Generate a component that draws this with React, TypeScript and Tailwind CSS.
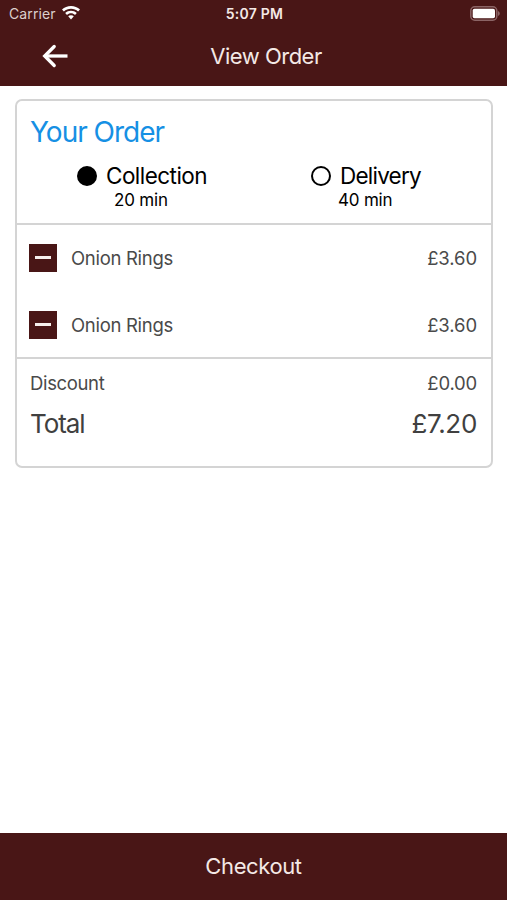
import { useState } from "react"

const methods = [
  { id: "collection", label: "Collection", time: "20 min", box: "pl-[60px] w-[294px]", timePad: "pl-[37px]", spacing: "tracking-[-0.54px]" },
  { id: "delivery", label: "Delivery", time: "40 min", box: "", timePad: "pl-[27px]", spacing: "tracking-[-0.78px]" },
]

const items = [
  { id: 1, name: "Onion Rings", price: "£3.60" },
  { id: 2, name: "Onion Rings", price: "£3.60" },
]

function StatusBar() {
  return (
    <div className="h-7 grid grid-cols-3 items-center pl-[9px] pr-[7px] text-[#f4e9e6]">
      <div className="flex items-center gap-[6px]">
        <span className="text-[14px] leading-7 tracking-[0.1px] text-[#dccfcd]">Carrier</span>
        <svg className="w-[18px] h-[14px] -mt-[2px]" viewBox="0 0 18 14" fill="#fff">
          <path d="M9 0C5.5 0 2.400 1.300 0 3.500l1.900 2C3.800 3.800 6.300 2.800 9 2.800s5.200 1 7.100 2.700l1.900-2C15.600 1.300 12.500 0 9 0z" />
          <path d="M9 4.700c-2.200 0-4.200.9-5.800 2.300l1.800 1.900C6.100 7.900 7.500 7.300 9 7.300s2.900.6 4 1.600L14.800 7C13.200 5.600 11.200 4.700 9 4.700z" />
          <path d="M9 9.200c-1.100 0-2.100.4-2.800 1.100L9 13.500l2.800-3.200C11.100 9.600 10.100 9.200 9 9.200z" />
        </svg>
      </div>
      <span className="text-center text-[14px] leading-7 tracking-[0.25px] font-semibold">5:07 PM</span>
      <svg className="w-[30px] h-[15px] justify-self-end -mt-[2px]" viewBox="0 0 30 15">
        <rect x="0.800" y="0.800" width="26" height="13.400" rx="4" fill="none" stroke="#8b6465" strokeWidth="1.500" />
        <rect x="2.700" y="2.700" width="22.300" height="9.600" rx="1.800" fill="#fff" />
        <path d="M28 5v5c1-.4 1.800-1.300 1.800-2.500S29 5.400 28 5z" fill="#8b6465" />
      </svg>
    </div>
  )
}

export default function App() {
  const [method, setMethod] = useState("collection")

  return (
    <div className="w-full h-screen flex flex-col bg-white font-['Inter',sans-serif] overflow-hidden">
      <header className="h-[86px] shrink-0 bg-[#491616]">
        <StatusBar />
        <div className="h-14 flex items-center text-[#f4e9e6]">
          <button className="ml-[42px]">
            <svg className="w-[26px] h-6" viewBox="0 0 26 24" fill="none" stroke="#fff" strokeWidth="3.300">
              <path d="M12.200 2.500L2.700 12l9.500 9.500" strokeLinecap="round" />
              <path d="M3 12h22.500" />
            </svg>
          </button>
          <h1 className="flex-1 pr-[43px] text-center text-[22px] leading-7 tracking-[-0.5px]">View Order</h1>
        </div>
      </header>

      <main className="flex-1 pl-[15px] pr-[14px] pt-[13px]">
        <div className="h-[369px] border-2 border-[#d4d4d4] rounded-[7px]">
          <section className="h-[124px] border-b-2 border-[#d4d4d4] pt-[13px]">
            <h2 className="pl-[13px] text-[28px] leading-9 tracking-[-1px] text-[#1690e4]">Your Order</h2>
            <div className="flex pt-[12px] text-black">
              {methods.map((m) => (
                <button key={m.id} onClick={() => setMethod(m.id)} className={`${m.box} text-left`}>
                  <div className="flex items-center gap-[9px]">
                    <span className={`w-5 h-5 rounded-full border-2 border-black ${method === m.id ? "bg-black" : ""}`} />
                    <span className={`text-[22.500px] leading-7 ${m.spacing}`}>{m.label}</span>
                  </div>
                  <div className={`${m.timePad} text-[17px] leading-5 tracking-[-0.2px]`}>{m.time}</div>
                </button>
              ))}
            </div>
          </section>

          <section className="h-[134px] border-b-2 border-[#d4d4d4] text-[18.500px] text-[#4a4a4a]">
            {items.map((item) => (
              <div key={item.id} className="h-[67px] flex items-center pl-[12px] pr-[14px]">
                <button className="w-7 h-7 mb-[2px] bg-[#491616] flex items-center justify-center">
                  <span className="w-4 h-[3px] bg-[#f7efed]" />
                </button>
                <span className="ml-[14px] tracking-[-0.3px]">{item.name}</span>
                <span className="ml-auto tracking-[-0.1px]">{item.price}</span>
              </div>
            ))}
          </section>

          <section className="pl-[13px] pr-[14px] pt-[10px] text-[#4a4a4a]">
            <div className="flex justify-between text-[18.500px] leading-7">
              <span className="tracking-[-0.35px]">Discount</span>
              <span className="tracking-[-0.2px]">£0.00</span>
            </div>
            <div className="flex justify-between pt-[9px] text-[26px] leading-9 text-[#404040]">
              <span className="tracking-[-1.1px]">Total</span>
              <span className="tracking-[-0.3px]">£7.20</span>
            </div>
          </section>
        </div>
      </main>

      <button className="h-[67px] shrink-0 bg-[#491616] text-[22px] tracking-[-0.4px] text-[#f4e9e6]">Checkout</button>
    </div>
  )
}
